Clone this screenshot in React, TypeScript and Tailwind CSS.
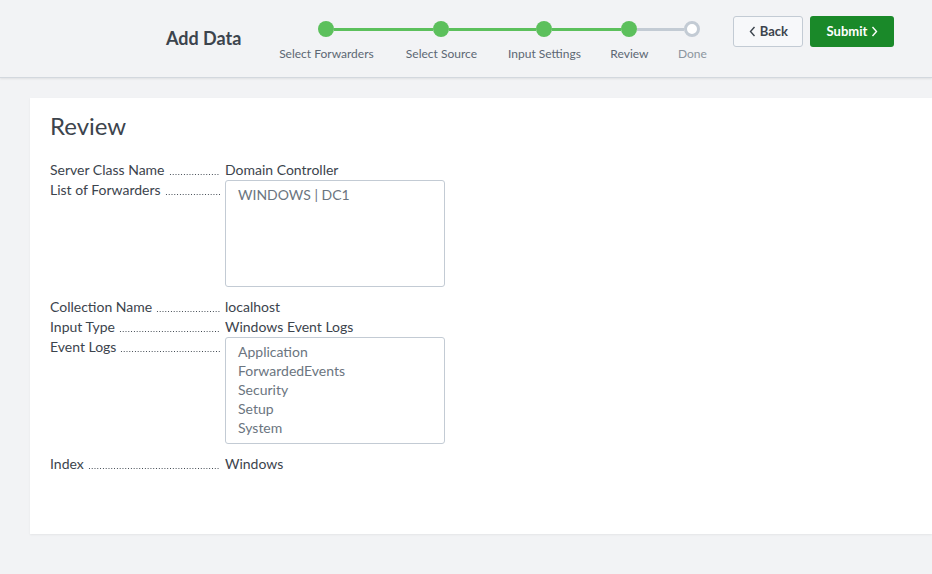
import React from "react";

const font = { fontFamily: "Lato, 'Open Sans', sans-serif" };

type Step = { label: string; width: number; state: "done" | "todo" };

const steps: Step[] = [
  { label: "Select Forwarders", width: 92, state: "done" },
  { label: "Select Source", width: 138, state: "done" },
  { label: "Input Settings", width: 68, state: "done" },
  { label: "Review", width: 102, state: "done" },
  { label: "Done", width: 24, state: "todo" },
];

function Steps() {
  return (
    <div className="flex">
      {steps.map((s, i) => {
        const leftColor =
          i === 0 ? "bg-transparent" : steps[i].state === "done" ? "bg-[#5cc05c]" : "bg-[#c3cbd4]";
        const rightColor =
          i === steps.length - 1
            ? "bg-transparent"
            : steps[i + 1].state === "done"
            ? "bg-[#5cc05c]"
            : "bg-[#c3cbd4]";
        return (
          <div key={s.label} className="flex flex-col items-center" style={{ width: s.width }}>
            <div className="flex w-full items-center">
              <div className={`h-[3px] flex-1 ${leftColor}`} />
              {s.state === "done" ? (
                <div className="h-4 w-4 shrink-0 rounded-full bg-[#5cc05c]" />
              ) : (
                <div className="h-4 w-4 shrink-0 rounded-full border-[3px] border-[#c3cbd4] bg-white" />
              )}
              <div className={`h-[3px] flex-1 ${rightColor}`} />
            </div>
            <div className="mt-[9px] flex w-full justify-center">
              <span
                className={`whitespace-nowrap text-[12px] leading-4 ${
                  s.state === "done" ? "text-[#5c6773]" : "text-[#8c959e]"
                }`}
              >
                {s.label}
              </span>
            </div>
          </div>
        );
      })}
    </div>
  );
}

function Row({ label, children }: { label: string; children: React.ReactNode }) {
  return (
    <div className="flex items-start text-[14px] leading-5 text-[#3c444d]">
      <div className="flex h-5 w-[170px] shrink-0 items-end whitespace-nowrap">
        <span className="shrink-0">{label}</span>
        <span className="mb-[5px] ml-[4px] h-[1px] flex-1 bg-[radial-gradient(circle,#3c444d_0.55px,transparent_0.9px)] bg-[length:2.8px_1px] bg-repeat-x" />
      </div>
      <div className="ml-[5px]">{children}</div>
    </div>
  );
}

function Box({ items }: { items: string[] }) {
  return (
    <div className="h-[107px] w-[220px] rounded-[3px] border border-[#c3cbd4] px-3 pt-[4px] text-[14px] leading-[19px] text-[#6b7580]">
      {items.map((it) => (
        <div key={it}>{it}</div>
      ))}
    </div>
  );
}

export default function App() {
  return (
    <div className="min-h-[574px] overflow-hidden bg-[#f2f3f5]" style={font}>
      <header className="flex h-[78px] items-start border-b border-[#d3d8de] bg-[#f2f3f5] shadow-[0_1px_2px_rgba(0,0,0,0.08)]">
        <h1 className="ml-[166px] mt-[26px] text-[18px] font-bold leading-6 text-[#3c444d]">
          Add Data
        </h1>
        <div className="ml-[39px] mt-[21px]">
          <Steps />
        </div>
        <div className="ml-[29px] mt-[16px] flex gap-[7px]">
          <button className="flex h-[31px] w-[70px] items-center justify-center gap-1 rounded-[3px] border border-[#c3cbd4] bg-[#f7f8fa] text-[13px] font-bold text-[#3c444d]">
            <svg width="7" height="11" viewBox="0 0 7 11" fill="none">
              <path d="M5.5 1L1.5 5.5L5.5 10" stroke="#3c444d" strokeWidth="1.4" />
            </svg>
            Back
          </button>
          <button className="flex h-[31px] w-[84px] items-center justify-center gap-1 rounded-[3px] bg-[#1a8929] text-[13px] font-bold text-white">
            Submit
            <svg width="7" height="11" viewBox="0 0 7 11" fill="none">
              <path d="M1.5 1L5.5 5.5L1.5 10" stroke="#ffffff" strokeWidth="1.4" />
            </svg>
          </button>
        </div>
      </header>

      <main className="ml-[30px] mt-[20px] bg-white pb-[60px] pl-5 pt-[13px] shadow-[0_1px_2px_rgba(0,0,0,0.06)]">
        <h2 className="text-[24px] leading-[30px] text-[#3c444d]">Review</h2>
        <div className="mt-[19px] flex flex-col">
          <Row label="Server Class Name">Domain Controller</Row>
          <Row label="List of Forwarders">
            <Box items={["WINDOWS | DC1"]} />
          </Row>
          <div className="mt-[10px]" />
          <Row label="Collection Name">localhost</Row>
          <Row label="Input Type">Windows Event Logs</Row>
          <Row label="Event Logs">
            <Box items={["Application", "ForwardedEvents", "Security", "Setup", "System"]} />
          </Row>
          <div className="mt-[10px]" />
          <Row label="Index">Windows</Row>
        </div>
      </main>
    </div>
  );
}
